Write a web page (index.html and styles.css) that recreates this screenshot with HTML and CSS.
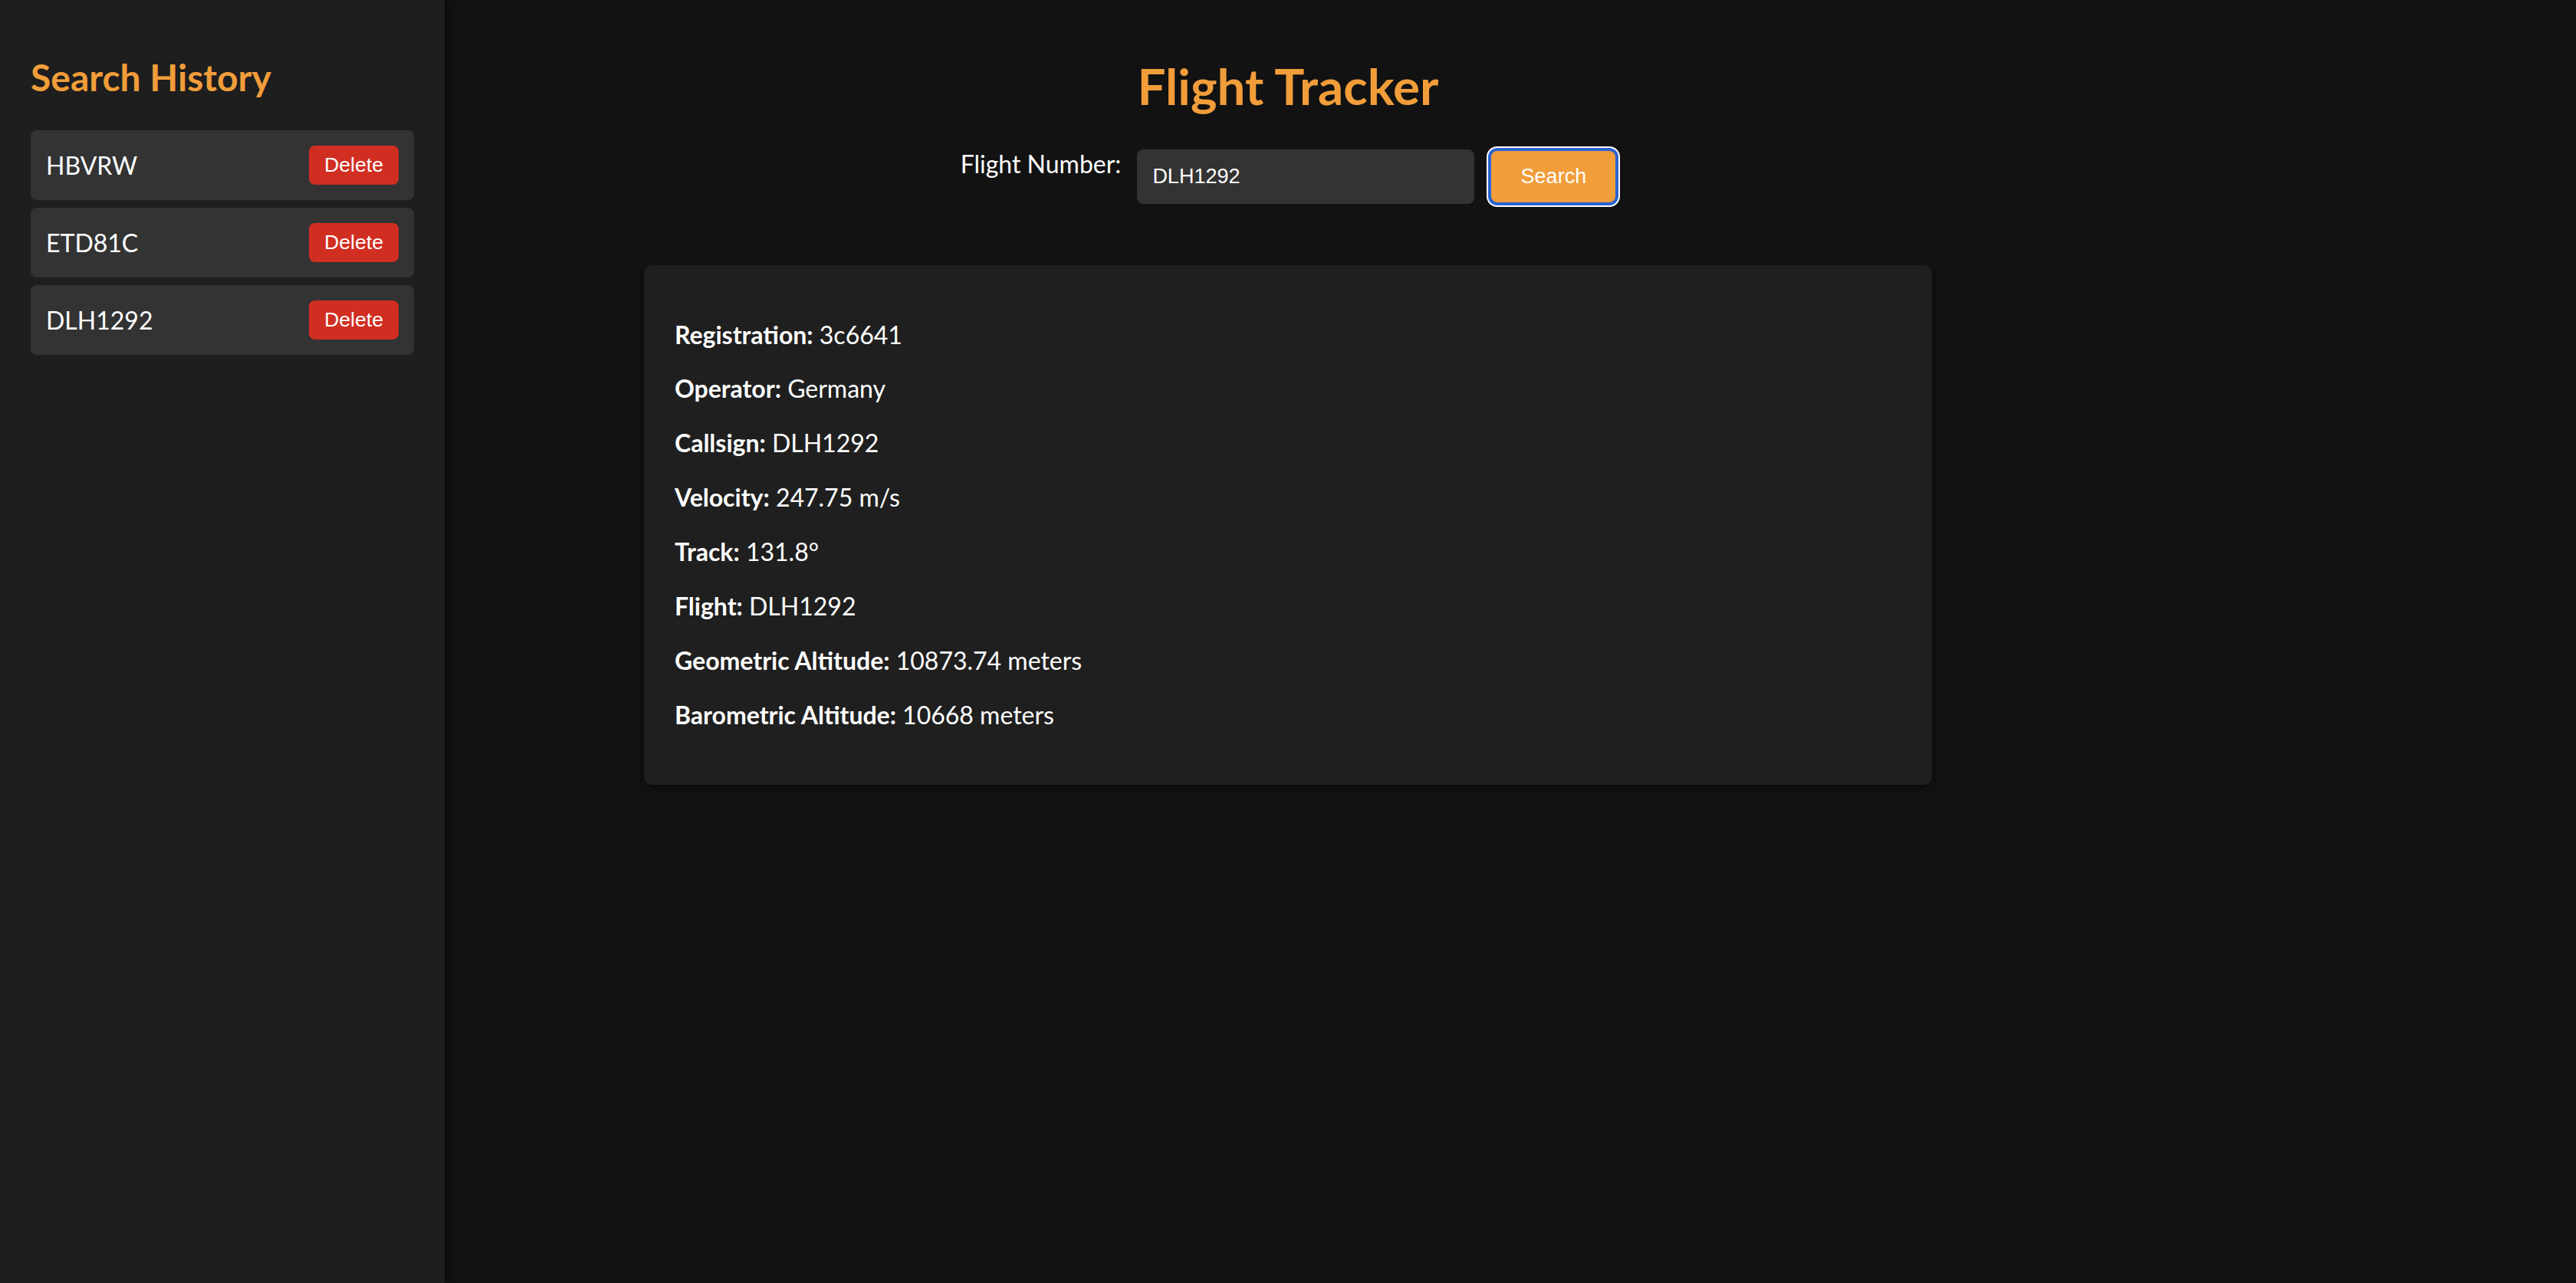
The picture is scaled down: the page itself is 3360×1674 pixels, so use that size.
FILE: index.html
```html
<!DOCTYPE html>
<html lang="en">
<head>
<meta charset="utf-8">
<title>Flight Tracker</title>
<link rel="stylesheet" href="styles.css">
</head>
<body>
<div class="layout">
  <aside class="sidebar">
    <h2 class="sidebar-title">Search History</h2>
    <ul class="history">
      <li class="history-item"><span class="history-name">HBVRW</span><button class="btn-delete">Delete</button></li>
      <li class="history-item"><span class="history-name">ETD81C</span><button class="btn-delete">Delete</button></li>
      <li class="history-item"><span class="history-name">DLH1292</span><button class="btn-delete">Delete</button></li>
    </ul>
  </aside>
  <main class="main">
    <h1 class="title">Flight Tracker</h1>
    <form class="search-form">
      <label class="search-label" for="flight">Flight Number:</label>
      <input class="search-input" id="flight" type="text" value="DLH1292">
      <button class="btn-search" type="button">Search</button>
    </form>
    <section class="details">
      <p class="detail"><strong>Registration:</strong> 3c6641</p>
      <p class="detail"><strong>Operator:</strong> Germany</p>
      <p class="detail"><strong>Callsign:</strong> DLH1292</p>
      <p class="detail"><strong>Velocity:</strong> 247.75 m/s</p>
      <p class="detail"><strong>Track:</strong> 131.8°</p>
      <p class="detail"><strong>Flight:</strong> DLH1292</p>
      <p class="detail"><strong>Geometric Altitude:</strong> 10873.74 meters</p>
      <p class="detail"><strong>Barometric Altitude:</strong> 10668 meters</p>
    </section>
  </main>
</div>
</body>
</html>
```
FILE: styles.css
```css
* { box-sizing: border-box; }

html, body {
  margin: 0;
  padding: 0;
  background: #121212;
  color: #ffffff;
  font-family: Lato, "Open Sans", "Liberation Sans", sans-serif;
}

.layout {
  display: flex;
  min-height: 100vh;
}

.sidebar {
  flex: 0 0 580px;
  width: 580px;
  min-height: 100vh;
  background: #1e1e1e;
  padding: 0 40px;
  box-shadow: 4px 0 10px rgba(0, 0, 0, 0.45);
  position: relative;
  z-index: 1;
}

.sidebar-title {
  margin: 72px 0 40px;
  font-size: 48px;
  font-weight: 700;
  color: #f09d3a;
  line-height: 1.2;
}

.history {
  list-style: none;
  margin: 0;
  padding: 0;
  display: flex;
  flex-direction: column;
  gap: 10px;
}

.history-item {
  display: flex;
  align-items: center;
  justify-content: space-between;
  height: 91px;
  padding: 0 20px;
  background: #333333;
  border-radius: 8px;
}

.history-name {
  font-size: 32px;
  color: #ffffff;
}

.btn-delete {
  height: 51px;
  padding: 0 20px;
  border: none;
  border-radius: 8px;
  background: #d12e22;
  color: #ffffff;
  font-family: "Liberation Sans", Arial, sans-serif;
  font-size: 26.67px;
}

.main {
  flex: 1;
  padding-right: 580px;
  display: flex;
  flex-direction: column;
  align-items: center;
}

.title {
  margin: 73px 0 43px;
  font-size: 65.5px;
  font-weight: 700;
  line-height: 1.2;
  color: #f09d3a;
}

.search-form {
  display: flex;
  align-items: center;
  height: 71px;
  margin: 0;
}

.search-label {
  align-self: flex-start;
  margin-right: 21px;
  font-size: 32px;
  line-height: 1.2;
}

.search-input {
  width: 440px;
  height: 71px;
  padding: 0 20px;
  border: none;
  border-radius: 8px;
  background: #333333;
  color: #ffffff;
  font-family: "Liberation Sans", Arial, sans-serif;
  font-size: 27px;
  outline: none;
}

.btn-search {
  margin-left: 22px;
  width: 162px;
  height: 67px;
  border: none;
  border-radius: 8px;
  background: #f09d3a;
  color: #ffffff;
  font-family: "Liberation Sans", Arial, sans-serif;
  font-size: 27px;
  box-shadow: 0 0 0 4px #2b63d3, 0 0 0 6px #ffffff;
}

.details {
  width: 1680px;
  margin-top: 80px;
  padding: 40px;
  background: #1f1f1f;
  border-radius: 10px;
  box-shadow: 0 4px 12px rgba(0, 0, 0, 0.5);
}

.detail {
  margin: 32px 0;
  font-size: 32px;
  line-height: 38.86px;
}

.detail strong {
  font-weight: 700;
}
```
